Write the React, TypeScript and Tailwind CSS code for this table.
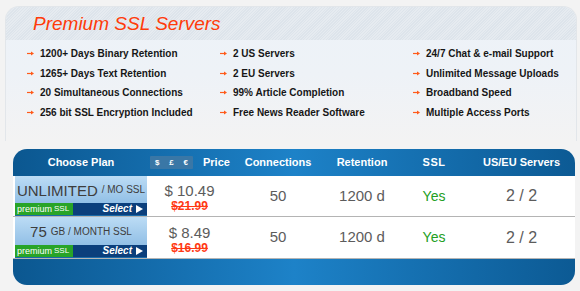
const features = [
  ['1200+ Days Binary Retention', '2 US Servers', '24/7 Chat & e-mail Support'],
  ['1265+ Days Text Retention', '2 EU Servers', 'Unlimited Message Uploads'],
  ['20 Simultaneous Connections', '99% Article Completion', 'Broadband Speed'],
  ['256 bit SSL Encryption Included', 'Free News Reader Software', 'Multiple Access Ports'],
];

type Plan = {
  big: string;
  small: string;
  price: string;
  oldPrice: string;
};

const plans: Plan[] = [
  { big: 'UNLIMITED', small: '/ MO SSL', price: '$ 10.49', oldPrice: '$21.99' },
  { big: '75', small: 'GB / MONTH SSL', price: '$ 8.49', oldPrice: '$16.99' },
];

const cols = 'grid grid-cols-[132px_85px_92px_76px_68px_1fr]';

function Arrow() {
  return (
    <svg width="7" height="5" viewBox="0 0 7 5" className="shrink-0">
      <path d="M0 2.5H4.5" stroke="#ff5a1a" strokeWidth="1.2" />
      <polygon points="4,0.6 7,2.5 4,4.4" fill="#ff5a1a" />
    </svg>
  );
}

function PlanCell({ plan }: { plan: Plan }) {
  return (
    <div className="flex flex-1 flex-col bg-gradient-to-b from-[#bcdcf5] to-[#7fb3df]">
      <div className="flex flex-1 items-center justify-center gap-[4px] pt-[1px] text-[#3d3d3d]">
        <span className="text-[15px] leading-none">{plan.big}</span>
        <span className="text-[10px] leading-none">{plan.small}</span>
      </div>
      <div className="flex h-[12px] items-center justify-between bg-[#0b3f7c] pr-[4px]">
        <span className="flex h-[12px] w-[58px] items-center bg-[#28a428] pl-[2px] text-[9px] leading-none text-white">
          premium <span className="ml-[2px] text-[8px]">SSL</span>
        </span>
        <span className="flex items-center gap-[4px] text-[10px] font-bold italic leading-none text-white">
          Select
          <svg width="7" height="8" viewBox="0 0 7 8">
            <polygon points="0,0 7,4 0,8" fill="#ffffff" />
          </svg>
        </span>
      </div>
    </div>
  );
}

export default function App() {
  return (
    <div className="h-[291px] w-[580px] overflow-hidden bg-[#f3f3f3] pl-[5px] pr-[3px] pt-[6px] font-['Liberation_Sans',Arial,sans-serif]">
      <div className="h-[135px] rounded-t-[14px] border-l border-r border-t border-[#e2e6ea] bg-gradient-to-b from-[#edf2f8] via-[#eef2f7] to-[#f3f3f3]">
        <div className="flex h-[33px] items-center rounded-t-[13px] bg-[repeating-linear-gradient(135deg,#e6ebf0_0px,#e6ebf0_1px,#dde4eb_1px,#dde4eb_2px)] pl-[27px]">
          <span className="text-[19px] italic leading-none text-[#ff3b0a]">Premium SSL Servers</span>
        </div>
        <div className="grid grid-cols-[193px_193px_1fr] pl-[21px] pt-[4px]">
          {features.map((row) =>
            row.map((text) => (
              <div key={text} className="flex h-[19.6px] items-center gap-[6px] text-[10px] font-bold text-[#161616]">
                <Arrow />
                <span>{text}</span>
              </div>
            )),
          )}
        </div>
      </div>

      <div className="ml-[8px] mt-[8px] w-[562px] overflow-hidden rounded-[14px] bg-gradient-to-r from-[#0b5790] via-[#1d82c8] to-[#0c5a94]">
        <div className={`${cols} h-[27px] items-center pl-[2px] text-[11px] font-bold text-white`}>
          <div className="text-center">Choose Plan</div>
          <div className="flex items-center pl-[3px]">
            <span className="flex h-[13px] w-[43px] items-center justify-around rounded-[1px] bg-[#3a77a6] text-[8px] leading-none">
              <span>$</span>
              <span>£</span>
              <span>€</span>
            </span>
            <span className="ml-[10px]">Price</span>
          </div>
          <div className="text-center">Connections</div>
          <div className="text-center">Retention</div>
          <div className="text-center tracking-[0.5px]">SSL</div>
          <div className="text-center">US/EU Servers</div>
        </div>

        {plans.map((plan, i) => (
          <div
            key={plan.price}
            className={`${cols} ${i === 0 ? 'h-[41px]' : 'h-[42px]'} border-b border-[#b4b4b4] bg-white pl-[2px]`}
          >
            <div className="flex flex-col bg-[#1a6aa8] pb-[1px]">
              <PlanCell plan={plan} />
            </div>
            <div className="flex flex-col items-center justify-center pt-[3px] leading-none">
              <span className="text-[15px] text-[#5c5c5c]">{plan.price}</span>
              <span className="mt-[2px] text-[12px] font-bold text-[#ff3a14] line-through">{plan.oldPrice}</span>
            </div>
            <div className="flex items-center justify-center text-[15px] text-[#5c5c5c]">50</div>
            <div className="flex items-center justify-center text-[15px] text-[#5c5c5c]">1200 d</div>
            <div className="flex items-center justify-center text-[14px] text-[#22a022]">Yes</div>
            <div className="flex items-center justify-center text-[16px] text-[#5c5c5c]">2 / 2</div>
          </div>
        ))}

        <div className="h-[26px]"></div>
      </div>
    </div>
  );
}
